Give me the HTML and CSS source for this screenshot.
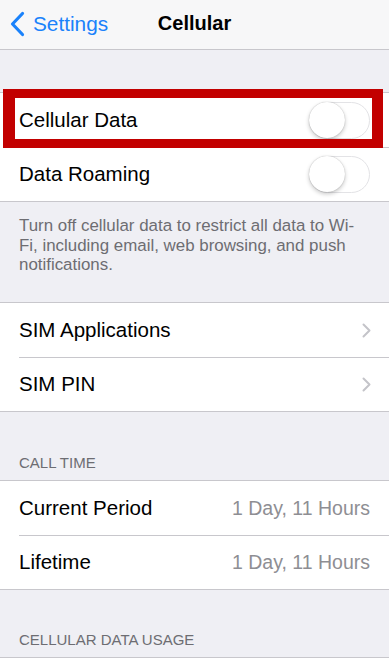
FILE: index.html
```html
<!DOCTYPE html>
<html>
<head>
<meta charset="utf-8">
<link rel="stylesheet" href="styles.css">
</head>
<body>
<div class="screen">
  <header class="nav">
    <div class="back">
      <svg class="back-icon" width="16" height="26" viewBox="0 0 16 26"><path d="M13.5 2.5 L3.5 13 L13.5 23.5" fill="none" stroke="#1a82fb" stroke-width="3.2" stroke-linecap="round" stroke-linejoin="round"/></svg>
      <span>Settings</span>
    </div>
    <div class="title">Cellular</div>
  </header>

  <div class="spacer-top"></div>

  <section class="group highlighted">
    <div class="row">
      <span class="label">Cellular Data</span>
      <span class="toggle"><span class="knob"></span></span>
    </div>
    <div class="row">
      <span class="label">Data Roaming</span>
      <span class="toggle"><span class="knob"></span></span>
    </div>
    <div class="redbox"></div>
  </section>
  <p class="footer">Turn off cellular data to restrict all data to Wi-Fi, including email, web browsing, and push notifications.</p>

  <section class="group">
    <div class="row">
      <span class="label">SIM Applications</span>
      <svg class="chev" width="9" height="15" viewBox="0 0 9 15"><path d="M1.5 1.5 L7.5 7.5 L1.5 13.5" fill="none" stroke="#c4c4c9" stroke-width="2" stroke-linecap="round" stroke-linejoin="round"/></svg>
    </div>
    <div class="row">
      <span class="label">SIM PIN</span>
      <svg class="chev" width="9" height="15" viewBox="0 0 9 15"><path d="M1.5 1.5 L7.5 7.5 L1.5 13.5" fill="none" stroke="#c4c4c9" stroke-width="2" stroke-linecap="round" stroke-linejoin="round"/></svg>
    </div>
  </section>

  <h2 class="header first">CALL TIME</h2>
  <section class="group">
    <div class="row">
      <span class="label">Current Period</span>
      <span class="value">1 Day, 11 Hours</span>
    </div>
    <div class="row">
      <span class="label">Lifetime</span>
      <span class="value">1 Day, 11 Hours</span>
    </div>
  </section>

  <h2 class="header second">CELLULAR DATA USAGE</h2>
  <section class="group tail"></section>
</div>
</body>
</html>
```

FILE: styles.css
```css
* { box-sizing: border-box; }
html, body { margin: 0; padding: 0; }
body {
  background: #efeff4;
  font-family: "Liberation Sans", Arial, sans-serif;
  color: #000;
  width: 389px;
  height: 662px;
  overflow: hidden;
}
.screen { display: flex; flex-direction: column; }

.nav {
  height: 50px;
  flex: none;
  background: #f7f7f8;
  border-bottom: 1px solid #c8c7cc;
  position: relative;
  display: flex;
  align-items: center;
}
.back {
  display: flex;
  align-items: center;
  gap: 8px;
  padding-left: 9px;
  padding-bottom: 2px;
  color: #1a82fb;
  font-size: 20.8px;
}
.back-icon { display: block; }
.title {
  position: absolute;
  left: 0; right: 0;
  top: 0; bottom: 2px;
  display: flex;
  align-items: center;
  justify-content: center;
  font-weight: bold;
  font-size: 20px;
  pointer-events: none;
}

.spacer-top { height: 42px; flex: none; }

.group {
  flex: none;
  background: #fff;
  border-top: 1px solid #c8c7cc;
  border-bottom: 1px solid #c8c7cc;
  position: relative;
}
.row {
  height: 54px;
  display: flex;
  align-items: center;
  justify-content: space-between;
  padding: 0 19px;
  position: relative;
  font-size: 20.5px;
}
.row + .row::before {
  content: "";
  position: absolute;
  left: 19px; right: 0; top: 0;
  border-top: 1px solid #c8c7cc;
}
.label { color: #000; }
.value { color: #8e8e93; font-size: 19.5px; }

.toggle {
  width: 61px;
  height: 37px;
  border-radius: 19px;
  background: #fff;
  border: 1.5px solid #e3e3e6;
  position: relative;
  display: block;
}
.knob {
  position: absolute;
  left: -1px; top: -1px;
  width: 36px; height: 36px;
  border-radius: 50%;
  background: #fff;
  box-shadow: 0 2px 4px rgba(0,0,0,0.22), 0 0 1px rgba(0,0,0,0.3);
}

.redbox {
  position: absolute;
  left: 3px;
  top: -4px;
  width: 380px;
  height: 59px;
  border: 9px solid #c20000;
  border-left-width: 12px;
  border-right-width: 11px;
}

.chev { display: block; margin-right: -1px; }

.footer {
  flex: none;
  margin: 0;
  padding: 14px 24px 0 19px;
  font-size: 16.9px;
  line-height: 19.5px;
  color: #6d6d72;
  height: 100px;
}

.header {
  flex: none;
  margin: 0;
  padding: 0 19px 9px;
  display: flex;
  align-items: flex-end;
  font-size: 15px;
  font-weight: normal;
  color: #6d6d72;
}
.header.first { height: 68px; }
.header.second { height: 67px; }
.tail { height: 10px; border-bottom: none; }
```
